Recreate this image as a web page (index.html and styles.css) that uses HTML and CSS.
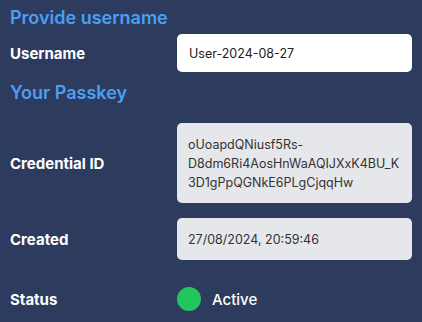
FILE: index.html
```html
<!DOCTYPE html>
<html lang="en">
<head>
    <meta charset="UTF-8">
    <meta name="viewport" content="width=device-width, initial-scale=1.0">
    <title>Passkey</title>
    <link rel="stylesheet" href="styles.css">
</head>
<body>
    <div class="passkey-panel">
        <h2 class="section-title">Provide username</h2>
        <div class="field-row first-row">
            <label for="username">Username</label>
            <input type="text" id="username" value="User-2024-08-27">
        </div>

        <h2 class="section-title second-title">Your Passkey</h2>
        <div class="field-row">
            <span class="field-label">Credential ID</span>
            <div class="readonly-box">oUoapdQNiusf5Rs-D8dm6Ri4AosHnWaAQIJXxK4BU_K3D1gPpQGNkE6PLgCjqqHw</div>
        </div>
        <div class="field-row created-row">
            <span class="field-label">Created</span>
            <div class="readonly-box">27/08/2024, 20:59:46</div>
        </div>
        <div class="field-row status-row">
            <span class="field-label">Status</span>
            <div class="status">
                <span class="status-dot"></span>
                <span class="status-text">Active</span>
            </div>
        </div>
    </div>
</body>
</html>
```

FILE: styles.css
```css
body {
    font-family: Inter, "Liberation Sans", sans-serif;
    background-color: #2d3b5e;
    margin: 0;
    padding: 0;
}

.passkey-panel {
    padding: 7px 10px 10px 10px;
}

.section-title {
    margin: 0;
    font-size: 18px;
    line-height: 22px;
    font-weight: 600;
    color: #4a9ff5;
}

.second-title {
    margin-top: 10px;
}

.field-row {
    display: grid;
    grid-template-columns: 167px 1fr;
    align-items: center;
    margin-top: 19px;
}

.first-row {
    margin-top: 5px;
}

.created-row {
    margin-top: 15px;
}

.status-row {
    margin-top: 27px;
}

label, .field-label {
    font-size: 15px;
    font-weight: 700;
    color: #ffffff;
}

input[type="text"] {
    box-sizing: border-box;
    width: 100%;
    height: 38px;
    padding: 0 12px;
    border: none;
    border-radius: 5px;
    background-color: #ffffff;
    font-family: Inter, "Liberation Sans", sans-serif;
    font-size: 12.5px;
    color: #222;
}

.readonly-box {
    padding: 11.5px 11px;
    border-radius: 5px;
    background-color: #e6e7eb;
    font-size: 12.5px;
    line-height: 19px;
    color: #333;
    overflow-wrap: anywhere;
}

.status {
    display: flex;
    align-items: center;
    gap: 11px;
}

.status-dot {
    width: 24px;
    height: 24px;
    border-radius: 50%;
    background-color: #22c55e;
}

.status-text {
    font-size: 15px;
    font-weight: 500;
    color: #ffffff;
}
```
